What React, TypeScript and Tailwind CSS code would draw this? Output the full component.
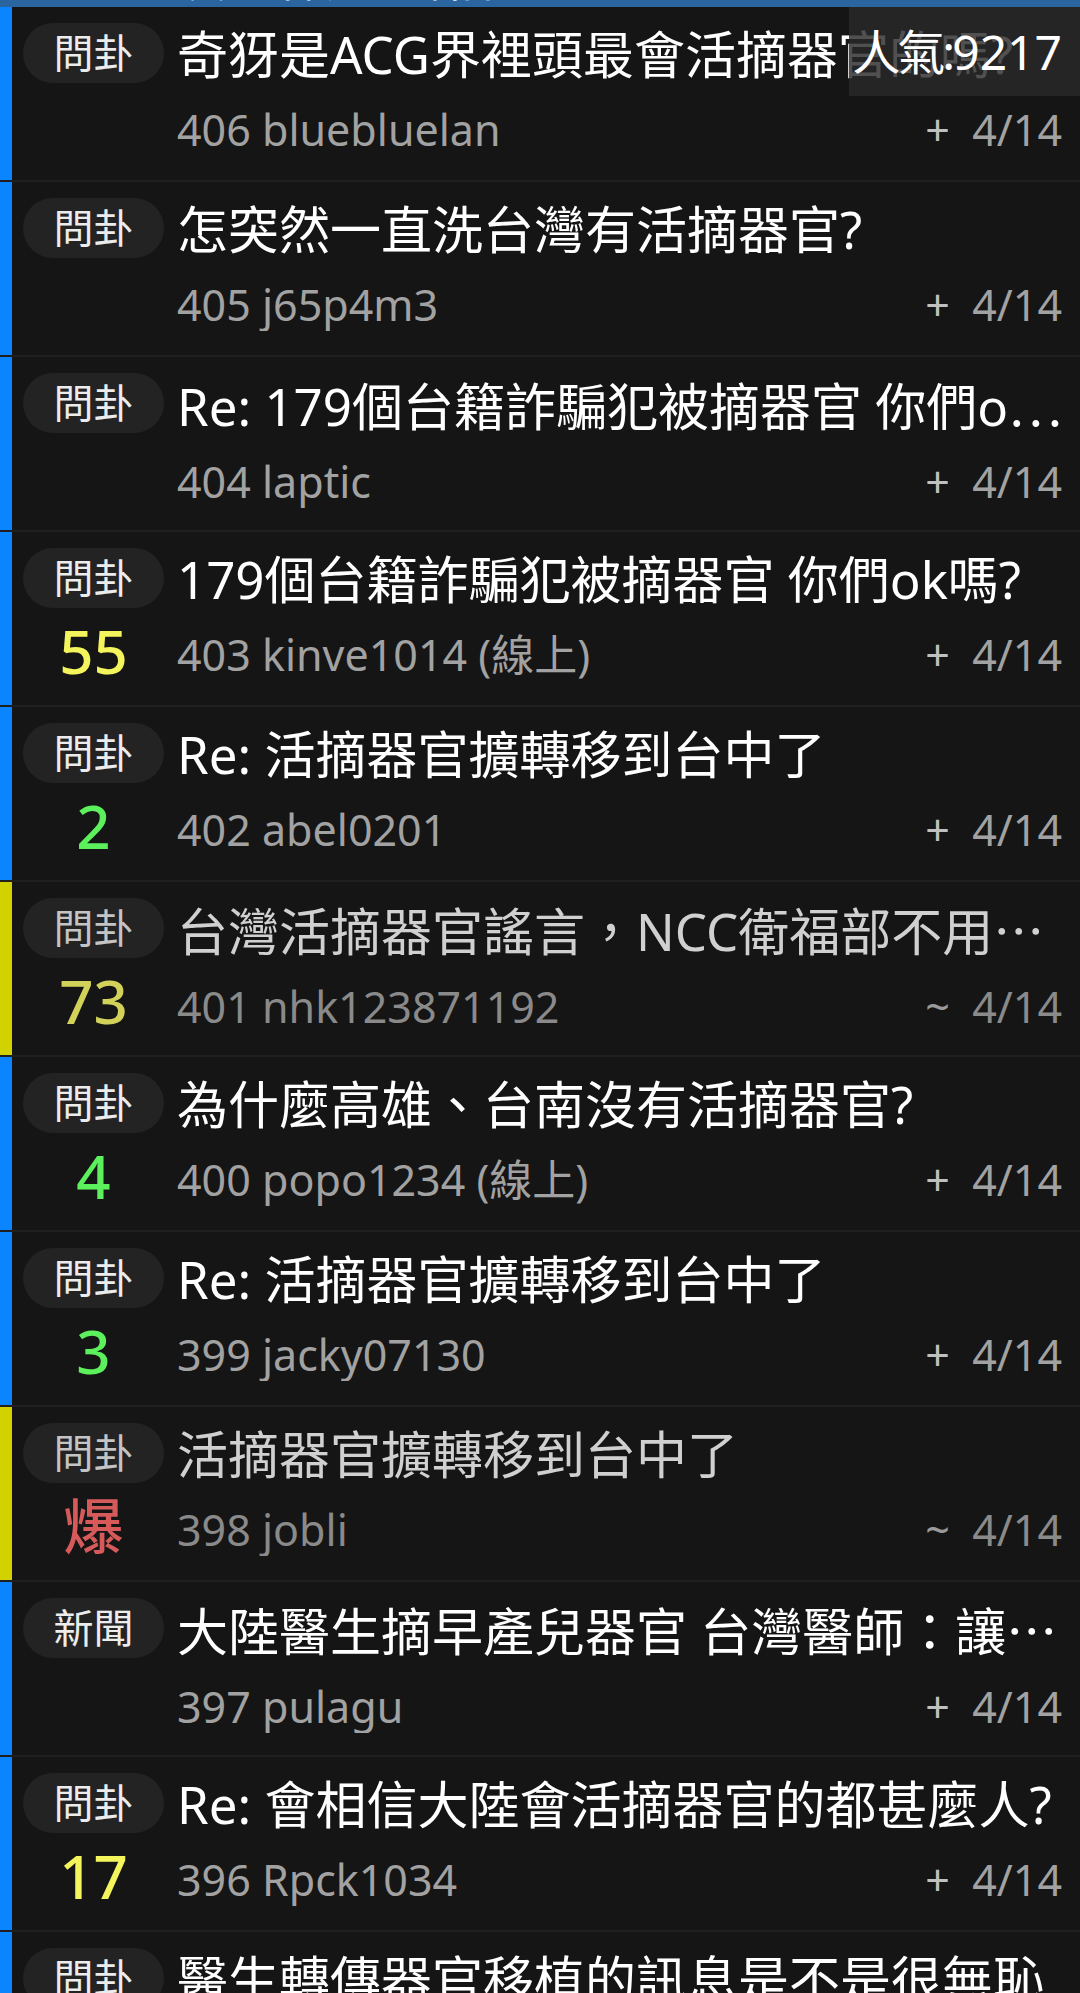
interface Post {
  id: number
  tag: string
  push?: string
  pushColor?: string
  title: string
  cut?: boolean
  author: string
  mark: '+' | '~'
  date: string
}

const posts: Post[] = [
  { id: 406, tag: '問卦', title: '奇犽是ACG界裡頭最會活摘器官的嗎?', author: 'bluebluelan', mark: '+', date: '4/14' },
  { id: 405, tag: '問卦', title: '怎突然一直洗台灣有活摘器官?', author: 'j65p4m3', mark: '+', date: '4/14' },
  { id: 404, tag: '問卦', title: 'Re: 179個台籍詐騙犯被摘器官 你們o', cut: true, author: 'laptic', mark: '+', date: '4/14' },
  { id: 403, tag: '問卦', push: '55', pushColor: 'text-[#f4f45c]', title: '179個台籍詐騙犯被摘器官 你們ok嗎?', author: 'kinve1014 (線上)', mark: '+', date: '4/14' },
  { id: 402, tag: '問卦', push: '2', pushColor: 'text-[#5cf05c]', title: 'Re: 活摘器官擴轉移到台中了', author: 'abel0201', mark: '+', date: '4/14' },
  { id: 401, tag: '問卦', push: '73', pushColor: 'text-[#d2d25a]', title: '台灣活摘器官謠言，NCC衛福部不用', cut: true, author: 'nhk123871192', mark: '~', date: '4/14' },
  { id: 400, tag: '問卦', push: '4', pushColor: 'text-[#5cf05c]', title: '為什麼高雄、台南沒有活摘器官?', author: 'popo1234 (線上)', mark: '+', date: '4/14' },
  { id: 399, tag: '問卦', push: '3', pushColor: 'text-[#5cf05c]', title: 'Re: 活摘器官擴轉移到台中了', author: 'jacky07130', mark: '+', date: '4/14' },
  { id: 398, tag: '問卦', push: '爆', pushColor: 'text-[#d65a5a]', title: '活摘器官擴轉移到台中了', author: 'jobli', mark: '~', date: '4/14' },
  { id: 397, tag: '新聞', title: '大陸醫生摘早產兒器官 台灣醫師：讓', cut: true, author: 'pulagu', mark: '+', date: '4/14' },
  { id: 396, tag: '問卦', push: '17', pushColor: 'text-[#f4f45c]', title: 'Re: 會相信大陸會活摘器官的都甚麼人?', author: 'Rpck1034', mark: '+', date: '4/14' },
  { id: 395, tag: '問卦', title: '醫生轉傳器官移植的訊息是不是很無恥', author: 'tom8755', mark: '+', date: '4/14' },
]

function Row({ p }: { p: Post }) {
  const read = p.mark === '~'
  return (
    <div className="flex h-[175px] shrink-0 border-b-2 border-[#1f1f1f] bg-[#151515]">
      <div className={`w-3 shrink-0 ${read ? 'bg-[#d2d200]' : 'bg-[#0a84ff]'}`} />
      <div className="flex w-[152px] shrink-0 flex-col items-center pl-[11px] pt-4">
        <div className={`flex h-[60px] w-[141px] items-center justify-center rounded-full bg-[#232323] text-[40px] leading-none ${read ? 'text-[#c4c4c4]' : 'text-[#ececec]'}`}>
          {p.tag}
        </div>
        {p.push && (
          <div className={`mt-[13px] text-[60px] font-medium leading-[60px] ${p.pushColor}`}>{p.push}</div>
        )}
      </div>
      <div className="min-w-0 flex-1 pl-[13px] pr-[18px] pt-[17px]">
        <div className={`overflow-hidden whitespace-nowrap text-[51px] leading-[60px] ${read ? 'text-[#d0d0d0]' : 'text-white'}`}>
          {p.title}
          {p.cut && <span className="font-['Noto_Sans_CJK_TC',sans-serif]">…</span>}
        </div>
        <div className={`mt-[20px] flex items-center justify-between text-[43px] leading-[52px] ${read ? 'text-[#8a8a8a]' : 'text-[#a2a2a2]'}`}>
          <span className="truncate">{p.id} {p.author}</span>
          <span className="shrink-0 whitespace-pre pl-4">
            <span className={read ? 'text-[#9a9a9a]' : 'text-[#c0c0c0]'}>{p.mark}</span>  {p.date}
          </span>
        </div>
      </div>
    </div>
  )
}

export default function App() {
  return (
    <div className="relative h-[1993px] w-[1080px] overflow-hidden bg-[#151515] font-['Noto_Sans','Noto_Sans_CJK_TC',sans-serif]">
      <div className="h-[7px] overflow-hidden bg-[#2b65a0]">
        <div className="-mt-[53px] pl-[176px] text-[50px] leading-[60px] text-white">搜尋標題：器官</div>
      </div>
      <div className="flex flex-col">
        {posts.map(p => (
          <Row key={p.id} p={p} />
        ))}
      </div>
      <div className="absolute right-0 top-[7px] flex h-[89px] w-[231px] items-center justify-end bg-[rgba(42,42,42,0.82)] pr-[18px] text-[48px] leading-none text-white">
        <span className="tracking-[-3px]">人氣:</span>
        <span>9217</span>
      </div>
    </div>
  )
}
